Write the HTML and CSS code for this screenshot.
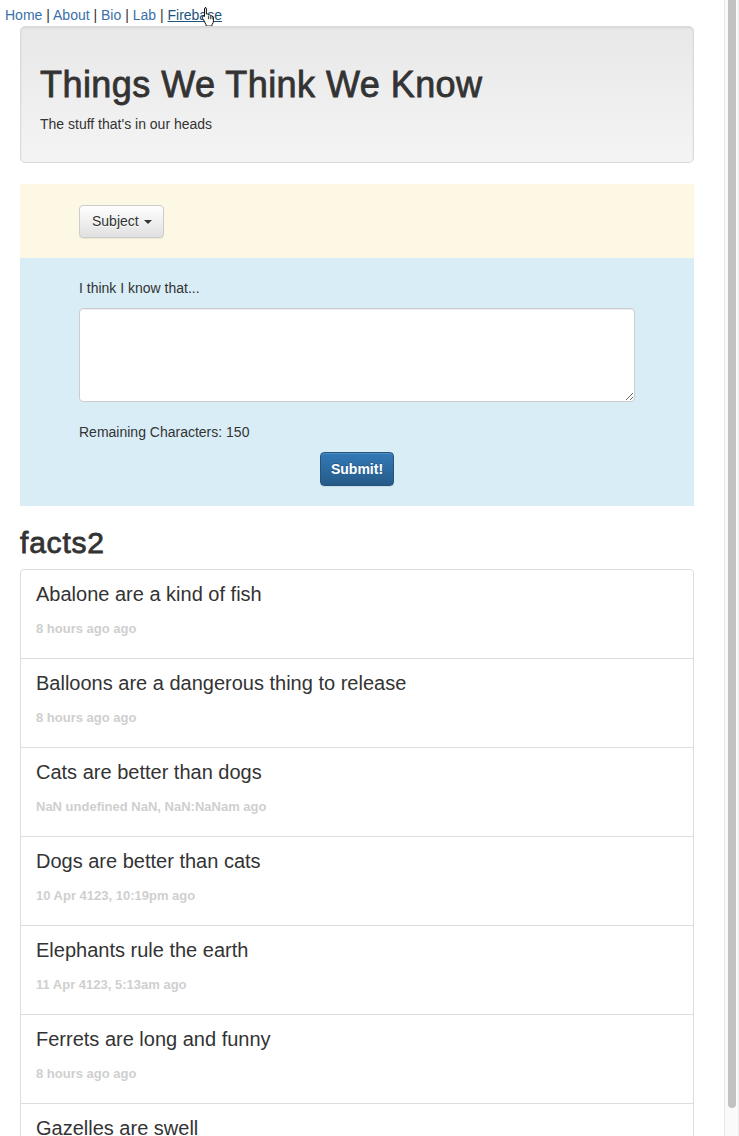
FILE: index.html
```html
<!DOCTYPE html>
<html>
<head>
<meta charset="utf-8">
<title>Things We Think We Know</title>
<link rel="stylesheet" href="styles.css">
</head>
<body>
<div class="page">
  <nav class="topnav">
    <a href="#">Home</a> <span class="sep">|</span> <a href="#">About</a> <span class="sep">|</span> <a href="#">Bio</a> <span class="sep">|</span> <a href="#">Lab</a> <span class="sep">|</span> <a href="#" class="hover">Firebase</a>
    <svg class="cursor" width="16" height="20" viewBox="0 0 16 20" aria-hidden="true">
      <path d="M5 1.5c.8 0 1.4.6 1.4 1.4v5.2l.3-.1c.7-.3 1.5.1 1.7.8.6-.4 1.5-.1 1.8.6.6-.3 1.4 0 1.6.7l.1.4c.7-.2 1.4.3 1.5 1v3.4c0 1.3-.4 2.4-1.1 3.4l-.4.6v1.2H6.1v-1.3L3.3 13.4c-.6-.6-.9-1.3-.9-2.1v-.4c0-.6.6-1 1.2-.8l.9.4V2.9c0-.8.6-1.4 1.4-1.4z" fill="#fff" stroke="#111" stroke-width="1"/>
      <path d="M8.4 9.6v3.6M10.3 10v3.2M12.1 10.6v2.6" stroke="#111" stroke-width=".8" fill="none"/>
    </svg>
  </nav>

  <div class="container">
    <header class="jumbotron">
      <h1>Things We Think We Know</h1>
      <p>The stuff that's in our heads</p>
    </header>

    <section class="subject-bar">
      <button class="btn btn-default" type="button">Subject <span class="caret"></span></button>
    </section>

    <section class="entry">
      <label class="entry-label" for="fact">I think I know that...</label>
      <textarea id="fact" class="entry-text"></textarea>
      <p class="remaining">Remaining Characters: 150</p>
      <div class="actions">
        <button class="btn btn-primary" type="button">Submit!</button>
      </div>
    </section>

    <h2 class="list-title">facts2</h2>
    <ul class="list-group">
      <li class="item"><h4>Abalone are a kind of fish</h4><p class="when">8 hours ago ago</p></li>
      <li class="item"><h4>Balloons are a dangerous thing to release</h4><p class="when">8 hours ago ago</p></li>
      <li class="item"><h4>Cats are better than dogs</h4><p class="when">NaN undefined NaN, NaN:NaNam ago</p></li>
      <li class="item"><h4>Dogs are better than cats</h4><p class="when">10 Apr 4123, 10:19pm ago</p></li>
      <li class="item"><h4>Elephants rule the earth</h4><p class="when">11 Apr 4123, 5:13am ago</p></li>
      <li class="item"><h4>Ferrets are long and funny</h4><p class="when">8 hours ago ago</p></li>
      <li class="item"><h4>Gazelles are swell</h4><p class="when">8 hours ago ago</p></li>
    </ul>
  </div>
</div>
<div class="scrollbar"><div class="thumb"></div></div>
</body>
</html>
```
FILE: styles.css
```css
html, body {
  margin: 0;
  padding: 0;
  height: 100%;
  overflow: hidden;
  background: #fff;
}
body {
  font-family: "Liberation Sans", Arial, Helvetica, sans-serif;
  font-size: 14px;
  line-height: 20px;
  color: #333;
}
.page {
  width: 724px;
}
.topnav {
  position: relative;
  padding: 5px 0 0 5px;
  height: 26px;
  box-sizing: border-box;
  white-space: nowrap;
}
.topnav a {
  color: #3a70aa;
  text-decoration: none;
}
.topnav a.hover {
  color: #23527c;
  text-decoration: underline;
}
.topnav .sep {
  color: #333;
}
.cursor {
  position: absolute;
  left: 200px;
  top: 6px;
}
.container {
  margin-left: 20px;
  width: 674px;
}
.jumbotron {
  box-sizing: border-box;
  height: 137px;
  padding: 38px 19px 0;
  border: 1px solid #dadada;
  border-radius: 5px;
  background: linear-gradient(to bottom, #e8e8e8 0%, #f4f4f4 100%);
  box-shadow: inset 0 1px 2px rgba(0,0,0,.075);
}
.jumbotron h1 {
  margin: 0;
  font-size: 36px;
  line-height: 40px;
  font-weight: 500;
  letter-spacing: 0.45px;
  -webkit-text-stroke: 0.8px #333;
  color: #333;
}
.jumbotron p {
  margin: 9px 0 0;
  font-size: 14px;
  line-height: 20px;
}
.subject-bar {
  margin-top: 21px;
  height: 74px;
  box-sizing: border-box;
  padding: 21px 59px 0;
  background: #fcf8e3;
}
.btn {
  display: inline-block;
  box-sizing: border-box;
  height: 34px;
  padding: 6px 12px;
  font-family: inherit;
  font-size: 14px;
  line-height: 20px;
  border-radius: 4px;
  cursor: pointer;
}
.btn-default {
  height: 33px;
  padding: 5px 11px 6px 12px;
  color: #333;
  border: 1px solid #ccc;
  background: linear-gradient(to bottom, #fff 0%, #e0e0e0 100%);
  box-shadow: inset 0 1px 0 rgba(255,255,255,.15), 0 1px 1px rgba(0,0,0,.075);
  text-shadow: 0 1px 0 #fff;
}
.caret {
  display: inline-block;
  width: 0;
  height: 0;
  margin-left: 1px;
  vertical-align: middle;
  border-top: 4px solid #333;
  border-left: 4px solid transparent;
  border-right: 4px solid transparent;
}
.btn-primary {
  padding: 6px 10px;
  color: #fff;
  font-weight: bold;
  border: 1px solid #245580;
  background: linear-gradient(to bottom, #337ab7 0%, #265a88 100%);
  text-shadow: 0 -1px 0 rgba(0,0,0,.2);
  box-shadow: inset 0 1px 0 rgba(255,255,255,.15), 0 1px 1px rgba(0,0,0,.075);
}
.entry {
  background: #d9edf7;
  padding: 20px 59px 20px;
  height: 248px;
  box-sizing: border-box;
}
.entry-label {
  display: block;
  font-size: 14px;
  line-height: 20px;
}
.entry-text {
  display: block;
  box-sizing: border-box;
  margin-top: 10px;
  width: 556px;
  height: 94px;
  border: 1px solid #ccc;
  border-radius: 4px;
  background: #fff;
  box-shadow: inset 0 1px 1px rgba(0,0,0,.075);
  font-family: inherit;
  font-size: 14px;
  padding: 6px 12px;
}
.remaining {
  margin: 20px 0 0;
  line-height: 20px;
}
.actions {
  display: flex;
  justify-content: center;
  margin: 10px -59px 0;
}
.list-title {
  margin: 20px 0 10px;
  font-size: 30px;
  line-height: 33px;
  font-weight: 500;
  letter-spacing: 0.8px;
  -webkit-text-stroke: 0.8px #333;
}
.list-group {
  list-style: none;
  margin: 0;
  padding: 0;
  border: 1px solid #ddd;
  border-radius: 4px;
}
.item {
  height: 89px;
  box-sizing: border-box;
  padding: 13px 15px 0;
  border-top: 1px solid #ddd;
}
.item:first-child {
  border-top: none;
  height: 88px;
}
.item h4 {
  margin: 0;
  font-size: 20px;
  line-height: 22px;
  font-weight: normal;
  color: #333;
}
.item .when {
  margin: 15px 0 0;
  font-size: 13px;
  line-height: 18px;
  font-weight: bold;
  color: #cfcfcf;
}
.scrollbar {
  position: fixed;
  top: 0;
  right: 0;
  width: 15px;
  height: 100%;
  box-sizing: border-box;
  background: #fafafa;
  border-left: 1px solid #e6e6e6;
  border-right: 1px solid #ececec;
}
.thumb {
  margin: 0 0 0 3px;
  width: 8px;
  height: 1108px;
  background: #c2c2c2;
  border-radius: 0 0 4px 4px;
}
```
